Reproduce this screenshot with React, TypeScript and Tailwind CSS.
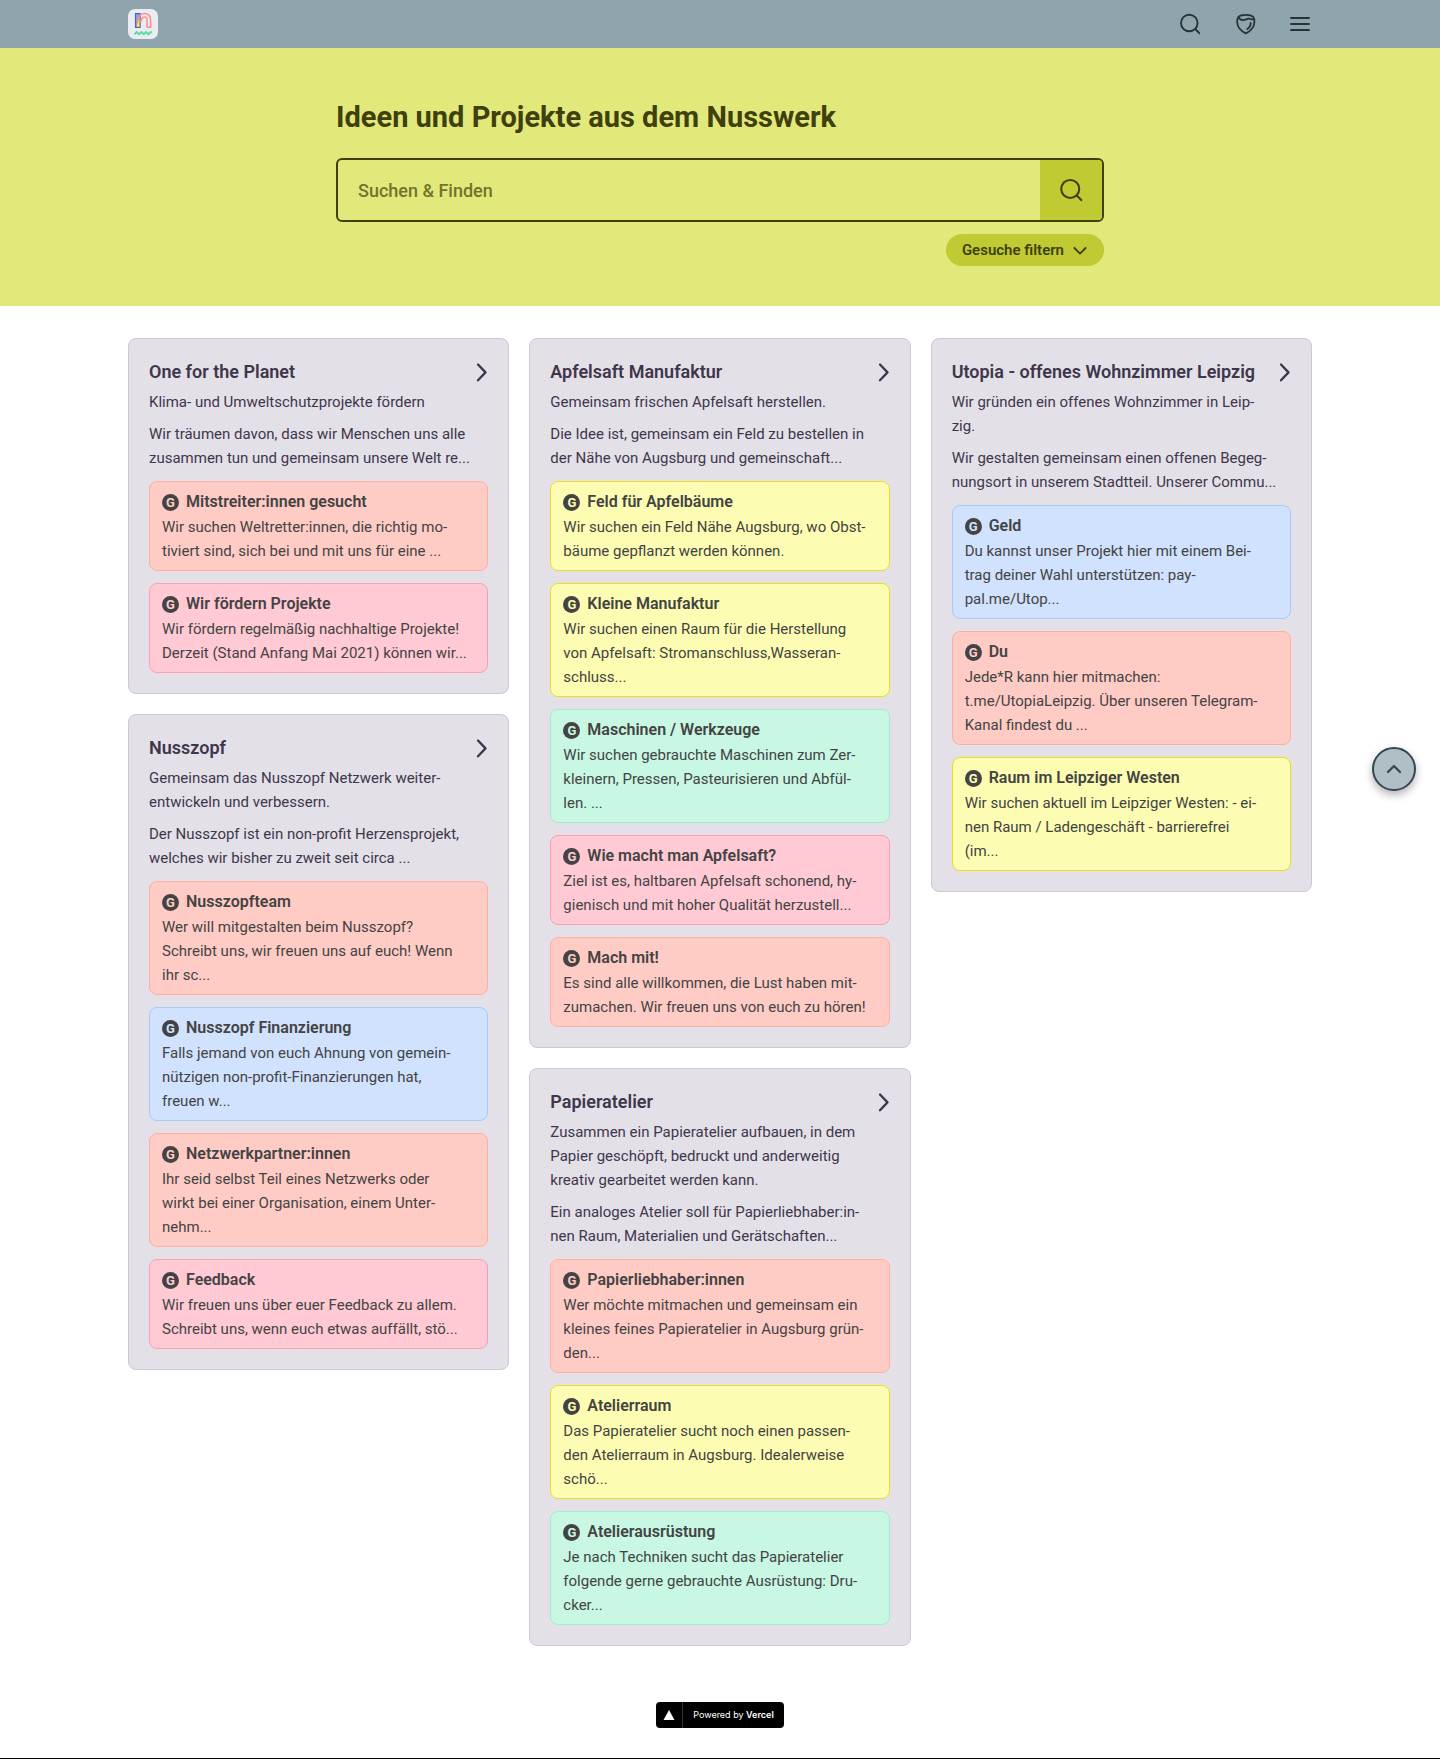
import React from "react";

type Tone = "coral" | "pink" | "yellow" | "blue" | "mint";

type Need = { title: string; text: string; tone: Tone };

type Project = { title: string; goal: string; text: string; needs: Need[] };

const boxTone: Record<Tone, string> = {
  coral: "bg-[#ffccc5] border-[#ffada2]",
  pink: "bg-[#ffcad4] border-[#ff9db1]",
  yellow: "bg-[#fcfdb2] border-[#eedc1f]",
  blue: "bg-[#d0e2fd] border-[#a9cbfb]",
  mint: "bg-[#c8f7e4] border-[#a2ead0]",
};

const badgeTone: Record<Tone, string> = {
  coral: "text-[#ffccc5]",
  pink: "text-[#ffcad4]",
  yellow: "text-[#fcfdb2]",
  blue: "text-[#d0e2fd]",
  mint: "text-[#c8f7e4]",
};

const columns: Project[][] = [
  [
    {
      title: "One for the Planet",
      goal: "Klima- und Umweltschutzprojekte fördern",
      text: "Wir träumen davon, dass wir Menschen uns alle\nzusammen tun und gemeinsam unsere Welt re...",
      needs: [
        {
          title: "Mitstreiter:innen gesucht",
          text: "Wir suchen Weltretter:innen, die richtig mo-\ntiviert sind, sich bei und mit uns für eine ...",
          tone: "coral",
        },
        {
          title: "Wir fördern Projekte",
          text: "Wir fördern regelmäßig nachhaltige Projekte!\nDerzeit (Stand Anfang Mai 2021) können wir...",
          tone: "pink",
        },
      ],
    },
    {
      title: "Nusszopf",
      goal: "Gemeinsam das Nusszopf Netzwerk weiter-\nentwickeln und verbessern.",
      text: "Der Nusszopf ist ein non-profit Herzensprojekt,\nwelches wir bisher zu zweit seit circa ...",
      needs: [
        {
          title: "Nusszopfteam",
          text: "Wer will mitgestalten beim Nusszopf?\nSchreibt uns, wir freuen uns auf euch! Wenn\nihr sc...",
          tone: "coral",
        },
        {
          title: "Nusszopf Finanzierung",
          text: "Falls jemand von euch Ahnung von gemein-\nnützigen non-profit-Finanzierungen hat,\nfreuen w...",
          tone: "blue",
        },
        {
          title: "Netzwerkpartner:innen",
          text: "Ihr seid selbst Teil eines Netzwerks oder\nwirkt bei einer Organisation, einem Unter-\nnehm...",
          tone: "coral",
        },
        {
          title: "Feedback",
          text: "Wir freuen uns über euer Feedback zu allem.\nSchreibt uns, wenn euch etwas auffällt, stö...",
          tone: "pink",
        },
      ],
    },
  ],
  [
    {
      title: "Apfelsaft Manufaktur",
      goal: "Gemeinsam frischen Apfelsaft herstellen.",
      text: "Die Idee ist, gemeinsam ein Feld zu bestellen in\nder Nähe von Augsburg und gemeinschaft...",
      needs: [
        {
          title: "Feld für Apfelbäume",
          text: "Wir suchen ein Feld Nähe Augsburg, wo Obst-\nbäume gepflanzt werden können.",
          tone: "yellow",
        },
        {
          title: "Kleine Manufaktur",
          text: "Wir suchen einen Raum für die Herstellung\nvon Apfelsaft: Stromanschluss,Wasseran-\nschluss...",
          tone: "yellow",
        },
        {
          title: "Maschinen / Werkzeuge",
          text: "Wir suchen gebrauchte Maschinen zum Zer-\nkleinern, Pressen, Pasteurisieren und Abfül-\nlen. ...",
          tone: "mint",
        },
        {
          title: "Wie macht man Apfelsaft?",
          text: "Ziel ist es, haltbaren Apfelsaft schonend, hy-\ngienisch und mit hoher Qualität herzustell...",
          tone: "pink",
        },
        {
          title: "Mach mit!",
          text: "Es sind alle willkommen, die Lust haben mit-\nzumachen. Wir freuen uns von euch zu hören!",
          tone: "coral",
        },
      ],
    },
    {
      title: "Papieratelier",
      goal: "Zusammen ein Papieratelier aufbauen, in dem\nPapier geschöpft, bedruckt und anderweitig\nkreativ gearbeitet werden kann.",
      text: "Ein analoges Atelier soll für Papierliebhaber:in-\nnen Raum, Materialien und Gerätschaften...",
      needs: [
        {
          title: "Papierliebhaber:innen",
          text: "Wer möchte mitmachen und gemeinsam ein\nkleines feines Papieratelier in Augsburg grün-\nden...",
          tone: "coral",
        },
        {
          title: "Atelierraum",
          text: "Das Papieratelier sucht noch einen passen-\nden Atelierraum in Augsburg. Idealerweise\nschö...",
          tone: "yellow",
        },
        {
          title: "Atelierausrüstung",
          text: "Je nach Techniken sucht das Papieratelier\nfolgende gerne gebrauchte Ausrüstung: Dru-\ncker...",
          tone: "mint",
        },
      ],
    },
  ],
  [
    {
      title: "Utopia - offenes Wohnzimmer Leipzig",
      goal: "Wir gründen ein offenes Wohnzimmer in Leip-\nzig.",
      text: "Wir gestalten gemeinsam einen offenen Begeg-\nnungsort in unserem Stadtteil. Unserer Commu...",
      needs: [
        {
          title: "Geld",
          text: "Du kannst unser Projekt hier mit einem Bei-\ntrag deiner Wahl unterstützen: pay-\npal.me/Utop...",
          tone: "blue",
        },
        {
          title: "Du",
          text: "Jede*R kann hier mitmachen:\nt.me/UtopiaLeipzig. Über unseren Telegram-\nKanal findest du ...",
          tone: "coral",
        },
        {
          title: "Raum im Leipziger Westen",
          text: "Wir suchen aktuell im Leipziger Westen: - ei-\nnen Raum / Ladengeschäft - barrierefrei\n(im...",
          tone: "yellow",
        },
      ],
    },
  ],
];

function Logo() {
  return (
    <svg viewBox="0 0 30 30" className="size-[30px]" fill="none" aria-hidden="true">
      <rect width="30" height="30" rx="7" fill="#e9edf1" />
      <rect x="7.700" y="4.600" width="4.200" height="13.800" fill="#7fa6f5" />
      <path d="M12 7.500v10.700H9c0-4 .8-8.200 3-10.700Z" fill="#fff04d" />
      <rect x="7.500" y="4.600" width="4.600" height="13.800" stroke="#5466ad" strokeWidth="1.200" />
      <path
        d="M9.200 14.500c.6-6 2.800-10 7.200-10 3.900 0 6.200 2.400 6.200 6.500v7.300h-3.500v-7c0-2.200-1-3.400-2.700-3.400-2.500 0-3 3.500-4.200 5.400"
        stroke="#ff8e8a"
        strokeWidth="1.500"
      />
      <path
        d="m6.500 25.200 2.300-2.200 2.300 2.200 2.400-2.200 2.300 2.200 2.300-2.200 2.400 2.200 2.300-2.200 1 .8"
        stroke="#5ddba6"
        strokeWidth="2"
        strokeLinejoin="round"
      />
    </svg>
  );
}

function NutIcon() {
  return (
    <svg
      viewBox="0 0 24 24"
      className="size-6"
      fill="none"
      stroke="currentColor"
      strokeWidth="1.800"
      strokeLinecap="round"
      strokeLinejoin="round"
      overflow="visible"
      aria-hidden="true"
    >
      <path d="M5.200 10.500C5 8 5.300 6.200 6.500 4.900 8 3.300 10.600 2.800 13.800 2.800s5.800.5 7.300 2.100c1.200 1.300 1.500 3.100 1.300 5.600-.4 5.200-4.400 8.800-8.600 10.900-4.200-2.100-8.200-5.700-8.600-10.900Z" />
      <path d="M6.400 5.200c.8 1.800 2.400 2.900 4.600 2.900 2.700 0 3.600-1.400 6-1.400 1.800 0 3 .9 5 .5" />
      <path d="M18.700 11c0 2.500-1.200 4.600-3.500 6" />
    </svg>
  );
}

function SearchIcon({ className, shift }: { className: string; shift?: boolean }) {
  return (
    <svg
      viewBox={shift ? "-2 0 24 24" : "0 0 24 24"}
      className={className}
      fill="none"
      stroke="currentColor"
      strokeWidth="1.900"
      strokeLinecap="round"
      aria-hidden="true"
    >
      <circle cx="11.300" cy="11" r="8.300" />
      <path d="m17.300 17 4.200 4.300" />
    </svg>
  );
}

function Chevron({ d, className }: { d: string; className: string }) {
  return (
    <svg
      viewBox="0 0 20 20"
      className={className}
      fill="none"
      stroke="currentColor"
      strokeLinecap="round"
      strokeLinejoin="round"
      strokeWidth="2.300"
      aria-hidden="true"
    >
      <path d={d} />
    </svg>
  );
}

function NeedBox({ need }: { need: Need }) {
  return (
    <li className={`rounded-lg border px-3 pt-2 pb-[7px] text-[#434343] ${boxTone[need.tone]}`}>
      <h3 className="mb-px flex items-center text-base leading-6 font-semibold">
        <span
          className={`mr-[7px] flex size-[17px] shrink-0 items-center justify-center rounded-full bg-[#434343] text-[13px] leading-none font-bold ${badgeTone[need.tone]}`}
        >
          G
        </span>
        {need.title}
      </h3>
      <p className="text-[15px] leading-6 whitespace-pre-line">{need.text}</p>
    </li>
  );
}

function ProjectCard({ project }: { project: Project }) {
  return (
    <article className="rounded-lg border border-[#cdc7d8] bg-[#e4e0e8] p-5 text-[#40364b]">
      <h2 className="mb-[5px] text-lg leading-[26px] font-semibold">
        <a href="#projekt" className="flex items-center justify-between">
          {project.title}
          <Chevron d="m6 2.500 7.500 7.900L6 18.300" className="-mr-1 size-5 shrink-0" />
        </a>
      </h2>
      <p className="text-[15px] leading-6 whitespace-pre-line">{project.goal}</p>
      <p className="mt-2 text-[15px] leading-6 whitespace-pre-line">{project.text}</p>
      <ul className="mt-[11px] flex flex-col gap-3">
        {project.needs.map((need) => (
          <NeedBox key={need.title} need={need} />
        ))}
      </ul>
    </article>
  );
}

export default function App() {
  return (
    <div className="border-b border-black bg-white font-['Roboto',sans-serif]">
      <header className="bg-[#90a4ae] text-[#263238]">
        <div className="mx-auto flex h-12 max-w-[1184px] items-center justify-between">
          <a href="#start" aria-label="Nusszopf">
            <Logo />
          </a>
          <nav className="flex items-center gap-8">
            <button type="button" aria-label="Suche">
              <SearchIcon className="size-6" shift />
            </button>
            <button type="button" aria-label="Nusswerk">
              <NutIcon />
            </button>
            <button type="button" aria-label="Menü">
              <svg
                viewBox="0 0 24 24"
                className="size-6"
                stroke="currentColor"
                strokeWidth="2"
                strokeLinecap="round"
                aria-hidden="true"
              >
                <path d="M3 6h18M3 12h18M3 18h18" />
              </svg>
            </button>
          </nav>
        </div>
      </header>

      <section className="bg-[#e1e97b] pt-[49px] pb-10 text-[#3f400c]">
        <div className="mx-auto flex max-w-[768px] flex-col">
          <h1 className="text-[29px] leading-10 font-bold">Ideen und Projekte aus dem Nusswerk</h1>
          <form
            className="mt-[21px] flex h-16 overflow-hidden rounded-md border-2 border-[#3f400c]"
            onSubmit={(e) => e.preventDefault()}
          >
            <input
              type="search"
              aria-label="Suchen & Finden"
              placeholder="Suchen & Finden"
              className="min-w-0 flex-1 bg-transparent px-5 pt-0.5 text-lg font-medium outline-none placeholder:text-[#71742f]"
            />
            <button
              type="submit"
              aria-label="Suchen"
              className="flex w-[62px] items-center justify-center bg-[#c0ca33]"
            >
              <SearchIcon className="size-[26px]" />
            </button>
          </form>
          <button
            type="button"
            className="mt-3 flex h-8 items-center gap-2 self-end rounded-full bg-[#c0ca33] px-4 text-[15px] font-semibold"
          >
            Gesuche filtern
            <Chevron d="m3 7.500 7 7 7-7" className="size-4" />
          </button>
        </div>
      </section>

      <main className="mx-auto grid max-w-[1184px] grid-cols-3 items-start gap-5 pt-8">
        {columns.map((projects) => (
          <div key={projects[0].title} className="flex min-w-0 flex-col gap-5">
            {projects.map((project) => (
              <ProjectCard key={project.title} project={project} />
            ))}
          </div>
        ))}
      </main>

      <footer className="flex justify-center pt-14 pb-[30px]">
        <a
          href="#vercel"
          className="flex h-[26px] w-32 items-center rounded bg-black font-['Inter',sans-serif] text-[9px] text-white"
        >
          <span className="flex h-full w-[27px] items-center justify-center border-r border-[#333]">
            <svg viewBox="0 0 12 10" className="h-2.5 w-3" fill="currentColor" aria-hidden="true">
              <path d="M6 0l5.500 10H.5z" />
            </svg>
          </span>
          <span className="flex-1 text-center">
            Powered by <b className="font-semibold">Vercel</b>
          </span>
        </a>
      </footer>

      <button
        type="button"
        aria-label="Nach oben"
        className="fixed top-[747px] right-6 flex size-11 items-center justify-center rounded-full border-2 border-[#37474f] bg-[#b0bec5] text-[#37474f] shadow-[0_4px_8px_rgba(0,0,0,0.3)]"
      >
        <Chevron d="m4 13 6-6 6 6" className="size-5" />
      </button>
    </div>
  );
}
